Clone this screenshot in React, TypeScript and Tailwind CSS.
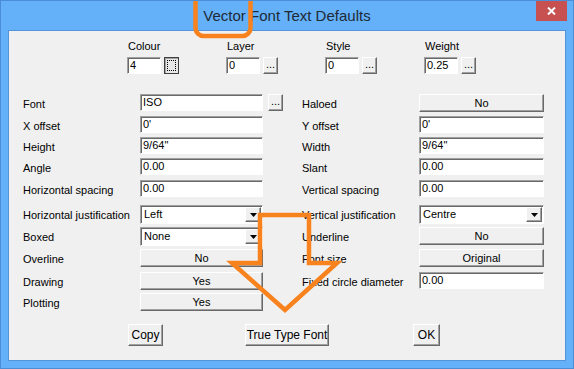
import type { ReactNode } from "react"

type Ctl =
  | { kind: "input"; value: string; more?: boolean }
  | { kind: "combo"; value: string }
  | { kind: "button"; value: string }

interface Row {
  label: string
  ctl: Ctl
}

const leftRows: Row[] = [
  { label: "Font", ctl: { kind: "input", value: "ISO", more: true } },
  { label: "X offset", ctl: { kind: "input", value: "0'" } },
  { label: "Height", ctl: { kind: "input", value: "9/64\"" } },
  { label: "Angle", ctl: { kind: "input", value: "0.00" } },
  { label: "Horizontal spacing", ctl: { kind: "input", value: "0.00" } },
  { label: "Horizontal justification", ctl: { kind: "combo", value: "Left" } },
  { label: "Boxed", ctl: { kind: "combo", value: "None" } },
  { label: "Overline", ctl: { kind: "button", value: "No" } },
  { label: "Drawing", ctl: { kind: "button", value: "Yes" } },
  { label: "Plotting", ctl: { kind: "button", value: "Yes" } },
]

const rightRows: (Row | null)[] = [
  { label: "Haloed", ctl: { kind: "button", value: "No" } },
  { label: "Y offset", ctl: { kind: "input", value: "0'" } },
  { label: "Width", ctl: { kind: "input", value: "9/64\"" } },
  { label: "Slant", ctl: { kind: "input", value: "0.00" } },
  { label: "Vertical spacing", ctl: { kind: "input", value: "0.00" } },
  { label: "Vertical justification", ctl: { kind: "combo", value: "Centre" } },
  { label: "Underline", ctl: { kind: "button", value: "No" } },
  { label: "Font size", ctl: { kind: "button", value: "Original" } },
  { label: "Fixed circle diameter", ctl: { kind: "input", value: "0.00" } },
  null,
]

const topGroups = [
  { label: "Colour", value: "4", colour: true },
  { label: "Layer", value: "0" },
  { label: "Style", value: "0" },
  { label: "Weight", value: "0.25" },
]

// classic raised 3D button
function Raised({ children, className = "" }: { children?: ReactNode; className?: string }) {
  return (
    <div
      className={
        "flex items-center justify-center bg-[#f0f0f0] border border-t-white border-l-white border-r-[#696969] border-b-[#696969] shadow-[inset_-1px_-1px_0_#a0a0a0] text-[11px] leading-none text-black " +
        className
      }
    >
      {children}
    </div>
  )
}

// sunken white edit field
function Field({ value, className = "" }: { value: string; className?: string }) {
  return (
    <div
      className={
        "flex items-center bg-white border border-t-[#a0a0a0] border-l-[#a0a0a0] border-r-white border-b-white shadow-[inset_1px_1px_0_#696969] pl-[2px] text-[11px] leading-none text-black " +
        className
      }
    >
      {value}
    </div>
  )
}

function Dots() {
  return (
    <Raised className="w-[15px] h-[17px] items-end pb-[3px]">
      <span className="leading-none">...</span>
    </Raised>
  )
}

function Combo({ value, width }: { value: string; width: string }) {
  return (
    <div
      className={
        "flex items-stretch h-[19px] bg-white border border-t-[#a0a0a0] border-l-[#a0a0a0] border-r-white border-b-white shadow-[inset_1px_1px_0_#696969] pl-[3px] pt-[1px] pr-[1px] pb-[1px] " +
        width
      }
    >
      <div className="flex-1 flex items-center text-[11px] leading-none text-black">{value}</div>
      <Raised className="w-[16px]">
        <svg width="7" height="4" viewBox="0 0 7 4">
          <path d="M0 0h7L3.5 4z" fill="#000" />
        </svg>
      </Raised>
    </div>
  )
}

function Control({ ctl, width }: { ctl: Ctl; width: string }) {
  if (ctl.kind === "input") {
    return (
      <div className="flex gap-[5px]">
        <Field value={ctl.value} className={"h-[17px] " + width} />
        {ctl.more && <Dots />}
      </div>
    )
  }
  if (ctl.kind === "combo") return <Combo value={ctl.value} width={width} />
  return <Raised className={"h-[18px] " + width}>{ctl.value}</Raised>
}

function Label({ text }: { text: string }) {
  return <div className="pt-[2px] text-[11px] leading-[17px] text-black whitespace-nowrap">{text}</div>
}

export default function App() {
  return (
    <div className="relative w-[574px] h-[369px] overflow-hidden bg-[#64b1fa] border border-[#4b8ed6] font-['Liberation_Sans',Arial,sans-serif]">
      {/* title bar */}
      <div className="grid grid-cols-[1fr_auto_1fr] h-[29px]">
        <div />
        <div className="text-[15px] leading-[29px] text-[#1e2a36]">Vector Font Text Defaults</div>
        <div className="flex justify-end pr-[6px]">
          <div className="w-[31px] h-[20px] bg-[#c75050] flex items-center justify-center">
            <svg width="9" height="8" viewBox="0 0 9 8">
              <path d="M1 0.5l7 7M8 0.5l-7 7" stroke="#fff" strokeWidth="2" />
            </svg>
          </div>
        </div>
      </div>

      {/* client area */}
      <div className="ml-[7px] w-[558px] h-[331px] bg-[#f0f0f0] border border-[#5494d8] pt-[9px]">
        <div className="flex pl-[118px]">
          {topGroups.map((g) => (
            <div key={g.label} className="w-[99px] flex flex-col gap-[4px]">
              <div className="pl-[1px] text-[11px] leading-[13px] text-black">{g.label}</div>
              <div className="flex gap-[3px]">
                <Field value={g.value} className="w-[34px] h-[17px]" />
                {g.colour ? (
                  <div className="w-[15px] h-[17px] border border-[#404040] bg-[#e8e8e8] shadow-[inset_1px_1px_0_#a0a0a0] p-[2px]">
                    <div className="w-full h-full border border-dotted border-black" />
                  </div>
                ) : (
                  <Dots />
                )}
              </div>
            </div>
          ))}
        </div>

        <div className="mt-[20px] pl-[14px] grid grid-cols-[117px_162px_117px_125px] grid-rows-[22px_21px_21px_22px_25px_22px_22px_23px_21px_18px]">
          {leftRows.map((row, i) => {
            const r = rightRows[i]
            return [
              <Label key={"ll" + i} text={row.label} />,
              <Control key={"lc" + i} ctl={row.ctl} width="w-[123px]" />,
              r ? <Label key={"rl" + i} text={r.label} /> : <div key={"rl" + i} />,
              r ? <Control key={"rc" + i} ctl={r.ctl} width="w-[125px]" /> : <div key={"rc" + i} />,
            ]
          })}
        </div>

        <div className="mt-[13px] flex pl-[119px]">
          <Raised className="w-[35px] h-[22px] text-[12px]">Copy</Raised>
          <Raised className="ml-[82px] w-[84px] h-[22px] text-[12px]">True Type Font</Raised>
          <Raised className="ml-[84px] w-[27px] h-[22px] text-[12px]">OK</Raised>
        </div>
      </div>

      {/* orange annotations drawn over the screenshot */}
      <svg className="absolute -left-px -top-px pointer-events-none" width="574" height="369" viewBox="0 0 574 369">
        <rect x="195.5" y="-12" width="55" height="48" rx="8" fill="none" stroke="#f7821e" strokeWidth="4.5" />
        <path
          d="M260 215H309V263H337L285 310L232 263H260Z"
          fill="none"
          stroke="#f7821e"
          strokeWidth="4.5"
          strokeLinejoin="miter"
        />
      </svg>
    </div>
  )
}
